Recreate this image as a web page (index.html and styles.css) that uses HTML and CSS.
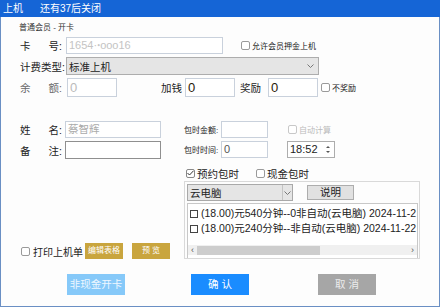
FILE: index.html
```html
<!DOCTYPE html>
<html lang="zh">
<head>
  <meta charset="UTF-8">
  <title>上机</title>
  <link rel="stylesheet" href="styles.css">
</head>
<body>
  <div class="window">
    <div class="titlebar"><span>上机</span><span class="t-note">还有37后关闭</span></div>
    <div class="content">
      <div class="sub">普通会员 - 开卡</div>

      <div class="row r1">
        <div class="lbl"><span>卡</span><span>号:</span></div>
        <div class="field card">1654·ꞏooo16</div>
        <div class="chk small push-r1"><span class="box"></span>允许会员押金上机</div>
      </div>

      <div class="row r2">
        <div class="lbl plain">计费类型:</div>
        <div class="select wide">
          <span>标准上机</span>
          <svg class="chev" width="7" height="4" viewBox="0 0 7 4"><polyline points="0.5,0.5 3.5,3.5 6.5,0.5" fill="none" stroke="#777" stroke-width="1"/></svg>
        </div>
      </div>

      <div class="row r3">
        <div class="lbl muted-lbl"><span>余</span><span>额:</span></div>
        <div class="field num muted">0</div>
        <div class="word add">加钱</div>
        <div class="field num add-in">0</div>
        <div class="word bonus">奖励</div>
        <div class="field num bonus-in">0</div>
        <div class="chk small no-bonus"><span class="box"></span>不奖励</div>
      </div>

      <div class="section">
        <div class="left">
          <div class="nrow">
            <div class="lbl short"><span>姓</span><span>名:</span></div>
            <div class="field name">蔡智辉</div>
          </div>
          <div class="nrow note-row">
            <div class="lbl short"><span>备</span><span>注:</span></div>
            <div class="field note"></div>
          </div>
          <div class="print-row">
            <div class="chk"><span class="box"></span>打印上机单</div>
            <div class="gold edit">编辑表格</div>
            <div class="gold preview">预 览</div>
          </div>
        </div>

        <div class="right">
          <div class="prow">
            <div class="plbl">包时金额:</div>
            <div class="field pfield"></div>
            <div class="chk small disabled auto"><span class="box"></span>自动计算</div>
          </div>
          <div class="prow prow2">
            <div class="plbl">包时时间:</div>
            <div class="field pfield val">0</div>
            <div class="field time">
              <span>18:52</span>
              <div class="spin">
                <span class="up"></span>
                <span class="down"></span>
              </div>
            </div>
          </div>
          <div class="crow">
            <div class="chk first">
              <span class="box checked">
                <svg width="7" height="6" viewBox="0 0 7 6"><polyline points="0.5,3 2.5,5 6.5,0.8" fill="none" stroke="#333" stroke-width="1"/></svg>
              </span>预约包时
            </div>
            <div class="chk second"><span class="box"></span>现金包时</div>
          </div>
          <div class="group">
            <div class="grow">
              <div class="select combo">
                <span>云电脑</span>
                <span class="drop">
                  <svg width="7" height="4" viewBox="0 0 7 4"><polyline points="0.5,0.5 3.5,3.5 6.5,0.5" fill="none" stroke="#777" stroke-width="1"/></svg>
                </span>
              </div>
              <div class="btn-note">说明</div>
            </div>
            <div class="listbox">
              <div class="item"><span class="ibox"></span>(18.00)元540分钟--0非自动(云电脑) 2024-11-2</div>
              <div class="item"><span class="ibox"></span>(18.00)元240分钟--非自动(云电脑) 2024-11-22</div>
              <div class="hscroll">
                <span class="arrow">&lsaquo;</span>
                <span class="thumb"></span>
                <span class="track"></span>
                <span class="arrow">&rsaquo;</span>
              </div>
            </div>
          </div>
        </div>
      </div>

      <div class="actions">
        <div class="btn light">非现金开卡</div>
        <div class="btn primary">确 认</div>
        <div class="btn grey">取 消</div>
      </div>
    </div>
  </div>
</body>
</html>
```

FILE: styles.css
```css
body {
  margin: 0;
  font-family: "Liberation Sans", "Noto Sans CJK SC", sans-serif;
  font-size: 10.5px;
  color: #222;
  background: #fff;
}
.window {
  width: 440px;
  height: 307px;
  display: flex;
  flex-direction: column;
}
.titlebar {
  height: 17px;
  line-height: 17px;
  background: #1565d6;
  color: #fff;
  font-size: 10px;
  padding-left: 3px;
  display: flex;
}
.t-note {
  margin-left: 17px;
}
.content {
  flex: 1;
  box-sizing: border-box;
  border: 1px solid #6a8fc4;
  border-top: none;
  background: #fdfdfd;
  display: flex;
  flex-direction: column;
}
.sub {
  margin: 5px 0 0 18px;
  height: 12px;
  line-height: 12px;
  font-size: 8px;
  color: #333;
}
.row {
  display: flex;
  align-items: center;
  margin-left: 19px;
  margin-top: 3px;
}
.r1 { height: 17px; }
.r2 { height: 18px; }
.r3 { height: 19px; }

.lbl {
  width: 46px;
  box-sizing: border-box;
  padding-right: 4px;
  display: flex;
  justify-content: space-between;
  flex-shrink: 0;
  white-space: nowrap;
}
.lbl.plain {
  display: block;
}
.lbl.short {
  width: 45px;
  padding-right: 3px;
}
.muted-lbl {
  color: #666;
}
.field {
  box-sizing: border-box;
  height: 17px;
  border: 1px solid #c9d1dc;
  background: #fff;
  line-height: 15px;
  padding-left: 2px;
  flex-shrink: 0;
  overflow: hidden;
  white-space: nowrap;
}
.card {
  width: 157px;
  color: #c4c4c4;
  font-size: 11px;
}
.chk {
  display: flex;
  align-items: center;
  white-space: nowrap;
}
.box {
  width: 9px;
  height: 9px;
  box-sizing: border-box;
  border: 1px solid #9a9a9a;
  border-radius: 2px;
  background: #fff;
  margin-right: 2px;
  display: flex;
  align-items: center;
  justify-content: center;
}
.small {
  font-size: 8px;
}
.push-r1 {
  margin-left: 18px;
}
.select {
  box-sizing: border-box;
  height: 18px;
  background: #e5e5e5;
  border: 1px solid #adadad;
  display: flex;
  align-items: center;
  justify-content: space-between;
  padding: 0 4px 0 2px;
}
.wide {
  width: 253px;
}
.num {
  width: 50px;
  height: 19px;
  font-size: 13px;
  line-height: 17px;
  color: #2a1a08;
}
.num.muted {
  color: #bbb;
  margin-left: 1px;
}
.add { margin-left: 44px; }
.add-in { margin-left: 3px; }
.bonus { margin-left: 5px; }
.bonus-in { margin-left: 7px; }
.no-bonus { margin-left: 3px; }

.section {
  display: flex;
  margin-top: 24px;
  height: 138px;
}
.left {
  width: 164px;
  margin-left: 19px;
  display: flex;
  flex-direction: column;
}
.nrow {
  display: flex;
  align-items: center;
  height: 17px;
}
.name {
  width: 96px;
  color: #aaa;
}
.note-row {
  margin-top: 3px;
  height: 18px;
}
.note {
  width: 96px;
  height: 18px;
  border-color: #8f8f8f;
}
.print-row {
  margin-top: auto;
  height: 16px;
  display: flex;
  align-items: center;
  font-size: 10px;
}
.print-row .box {
  margin-left: 1px;
  margin-right: 3px;
}
.gold {
  width: 38px;
  height: 16px;
  line-height: 16px;
  background: #c9a53e;
  color: #fff;
  font-size: 8px;
  text-align: center;
}
.edit { margin-left: 2px; }
.preview { margin-left: 9px; }

.right {
  width: 236px;
}
.prow {
  display: flex;
  align-items: center;
  height: 17px;
}
.prow2 {
  margin-top: 3px;
}
.plbl {
  width: 37px;
  font-size: 8px;
  white-space: nowrap;
}
.pfield {
  width: 47px;
}
.val {
  color: #555;
  font-size: 11px;
}
.disabled {
  color: #bbb;
}
.disabled .box {
  border-color: #c8c8c8;
}
.auto {
  margin-left: 20px;
}
.time {
  margin-left: 19px;
  width: 48px;
  border-color: #adadad;
  font-size: 11px;
  display: flex;
  justify-content: space-between;
  padding-right: 1px;
}
.spin {
  width: 10px;
  display: flex;
  flex-direction: column;
  justify-content: center;
  gap: 3px;
}
.up, .down {
  width: 0;
  height: 0;
  margin: 0 auto;
  border-left: 2px solid transparent;
  border-right: 2px solid transparent;
}
.up { border-bottom: 2px solid #555; }
.down { border-top: 2px solid #555; }

.crow {
  display: flex;
  align-items: center;
  height: 12px;
  margin-top: 9px;
}
.first {
  margin-left: 2px;
}
.second {
  margin-left: 17px;
}
.box.checked {
  border-color: #888;
}
.group {
  margin-top: 2px;
  height: 78px;
  box-sizing: border-box;
  border: 1px solid #d9d9d9;
  padding: 2px 1px 0 2px;
  display: flex;
  flex-direction: column;
}
.grow {
  display: flex;
  align-items: center;
  height: 17px;
}
.combo {
  width: 106px;
  height: 17px;
  padding: 0 0 0 2px;
  border-color: #a9a9a9;
}
.drop {
  width: 9px;
  height: 15px;
  border-left: 1px solid #c4c4c4;
  display: flex;
  align-items: center;
  justify-content: center;
}
.btn-note {
  margin-left: 14px;
  width: 47px;
  height: 15px;
  line-height: 13px;
  box-sizing: border-box;
  border: 1px solid #adadad;
  background: #e1e1e1;
  text-align: center;
}
.listbox {
  margin-top: 2px;
  flex: 1;
  border: 1px solid #c8c8c8;
  border-bottom: none;
  background: #fff;
  display: flex;
  flex-direction: column;
  padding-top: 2px;
  overflow: hidden;
}
.item {
  height: 15px;
  line-height: 15px;
  display: flex;
  align-items: center;
  white-space: nowrap;
  padding-left: 2px;
}
.ibox {
  width: 8px;
  height: 8px;
  box-sizing: border-box;
  border: 1px solid #444;
  margin-right: 3px;
  flex-shrink: 0;
}
.hscroll {
  margin-top: auto;
  margin-bottom: 3px;
  height: 10px;
  display: flex;
  align-items: center;
  background: #f0f0f0;
}
.arrow {
  width: 9px;
  text-align: center;
  font-size: 9px;
  line-height: 10px;
  color: #555;
}
.thumb {
  width: 123px;
  height: 9px;
  background: #cdcdcd;
}
.track {
  flex: 1;
}

.actions {
  display: flex;
  margin-top: 15px;
  height: 21px;
}
.btn {
  width: 58px;
  line-height: 21px;
  text-align: center;
  color: #fff;
}
.light {
  margin-left: 66px;
  background: #86c9f9;
  color: #eef7ff;
}
.primary {
  margin-left: 66px;
  background: #1a8cff;
}
.grey {
  margin-left: 69px;
  background: #a6a6a6;
  color: #ececec;
}
```
